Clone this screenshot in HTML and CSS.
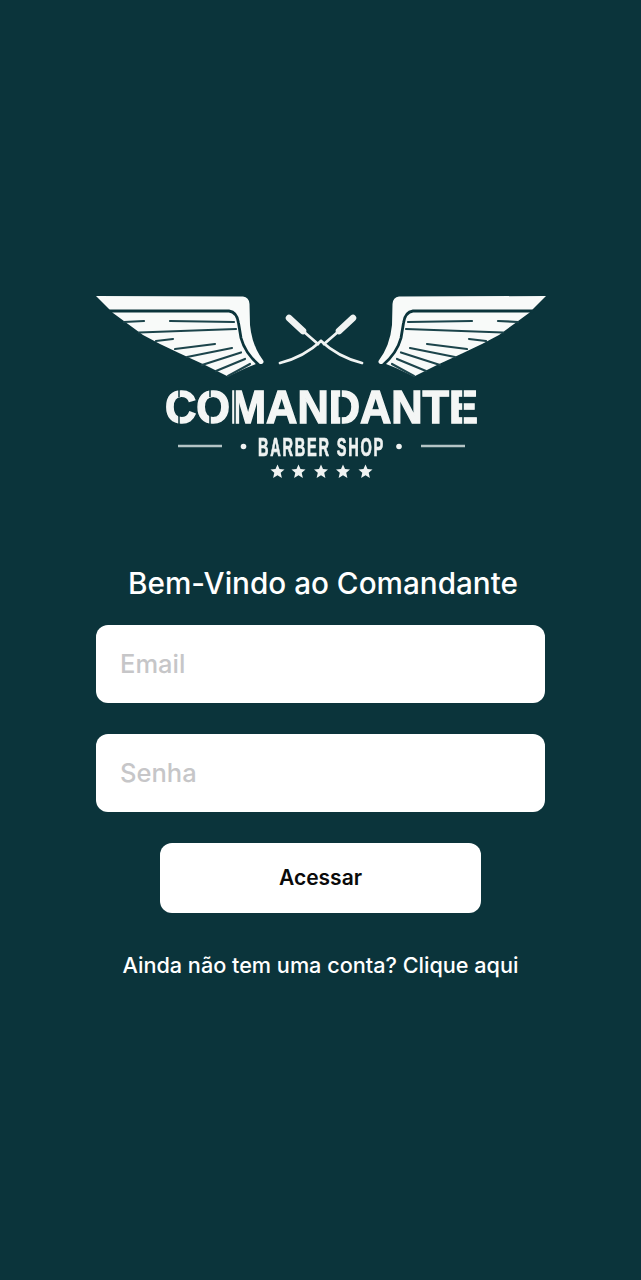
FILE: index.html
```html
<!DOCTYPE html>
<html lang="pt-BR">
<head>
<meta charset="utf-8">
<title>Comandante Barber Shop</title>
<link rel="stylesheet" href="styles.css">
</head>
<body>
<main class="screen">
  <svg class="logo" viewBox="95 292 452 190" role="img" aria-label="Comandante Barber Shop">
    <defs>
      <g id="wing">
        <path class="fill" d="M96 296 L243 296.500 Q249 297 249.500 304 L250 325 Q252 346 263.500 361 Q264 364 260 364 L256 364 L246 368 L228 376.500 L205 365 L180 353.500 L160 344 L143 335 L128 324 L113 313 Z"/>
        <path class="cut wide" d="M110 311 L229 311 Q237 312 238.500 323 L241 338 Q245 353 259 365"/>
        <path class="cut" d="M170 321 L234 322"/>
        <path class="cut" d="M124 322 L144 321"/>
        <path class="cut" d="M139 332.500 L236 329"/>
        <path class="cut" d="M156 341 L173 339"/>
        <path class="cut" d="M175 349 L215 344"/>
        <path class="cut" d="M187 357 L232 348"/>
        <path class="cut" d="M202 365 L241 352.500"/>
        <path class="cut" d="M216 371 L245 359"/>
        <path class="cut" d="M228 376 L250 364"/>
      </g>
      <g id="razor">
        <path class="blade" d="M289 318 L303 331"/>
        <path class="tang" d="M303 331 L318 344"/>
        <path class="tang" d="M321 341 Q304 357 280 363"/>
      </g>
      <polygon id="star" points="0,-7 2,-2.400 7,-2 3.200,1.200 4.400,6.400 0,3.700 -4.400,6.400 -3.200,1.200 -7,-2 -2,-2.400"/>
    </defs>

    <use href="#wing"/>
    <use href="#wing" transform="matrix(-1 0 0 1 642 0)"/>
    <use href="#razor"/>
    <use href="#razor" transform="matrix(-1 0 0 1 642 0)"/>

    <text class="brand" x="165" y="423" textLength="313" lengthAdjust="spacingAndGlyphs">COMANDANTE</text>
    <path class="stencil" d="M179 388V397M179 416V426M210 388V397M210 416V426M235 388V426M341 388V426M463 388V426"/>

    <text class="sub" x="258" y="456" textLength="127" lengthAdjust="spacingAndGlyphs">BARBER SHOP</text>
    <path class="rule" d="M178 446H222M421 446H465"/>
    <circle class="mark" cx="243.500" cy="446.500" r="2.800"/>
    <circle class="mark" cx="399" cy="446.500" r="2.800"/>
    <use class="mark" href="#star" x="277.500" y="471.500"/>
    <use class="mark" href="#star" x="298.500" y="471.500"/>
    <use class="mark" href="#star" x="321" y="471.500"/>
    <use class="mark" href="#star" x="343" y="471.500"/>
    <use class="mark" href="#star" x="365.500" y="471.500"/>
  </svg>

  <h1 class="title">Bem-Vindo ao Comandante</h1>

  <form class="form">
    <div class="field">Email</div>
    <div class="field">Senha</div>
    <button class="submit" type="button">Acessar</button>
  </form>

  <a class="signup" href="#">Ainda não tem uma conta? Clique aqui</a>
</main>
</body>
</html>
```

FILE: styles.css
```css
* {
  box-sizing: border-box;
}

html,
body {
  margin: 0;
  height: 100%;
}

body {
  background: #0b343b;
  font-family: Inter, Roboto, "Liberation Sans", sans-serif;
}

.screen {
  width: 641px;
  height: 1280px;
  padding-top: 292px;
  display: flex;
  flex-direction: column;
  align-items: center;
  overflow: hidden;
}

.logo {
  display: block;
  width: 452px;
  height: 190px;
  flex: none;
  filter: blur(0.6px);
}

.fill {
  fill: #f8faf9;
}

.cut {
  fill: none;
  stroke: #1c444b;
  stroke-width: 2.200;
  stroke-linecap: round;
  stroke-linejoin: round;
}

.cut.wide {
  stroke: #0b343b;
  stroke-width: 2.800;
}

.blade {
  fill: none;
  stroke: #f0f3f2;
  stroke-width: 6.500;
  stroke-linecap: round;
}

.tang {
  fill: none;
  stroke: #f0f3f2;
  stroke-width: 2.800;
  stroke-linecap: round;
}

.brand {
  fill: #f4f6f5;
  stroke: #f4f6f5;
  stroke-width: 1.400;
  font-family: "Liberation Sans", sans-serif;
  font-weight: 700;
  font-size: 46px;
}

.stencil {
  fill: none;
  stroke: #0b343b;
  stroke-width: 1.500;
}

.sub {
  fill: #eef2f1;
  stroke: #eef2f1;
  stroke-width: 0.700;
  font-family: "Liberation Sans Narrow", "Liberation Sans", sans-serif;
  font-weight: 700;
  font-size: 25px;
  letter-spacing: 3px;
}

.rule {
  fill: none;
  stroke: #b4c4c5;
  stroke-width: 2.400;
}

.mark {
  fill: #f0f3f2;
}

.title {
  margin: 84px 0 0 5px;
  color: #fff;
  font-size: 29.700px;
  line-height: 34px;
  font-weight: 500;
  white-space: nowrap;
}

.form {
  margin-top: 25px;
  width: 449px;
  display: flex;
  flex-direction: column;
  align-items: center;
  gap: 31px;
}

.field {
  width: 100%;
  height: 78px;
  padding: 0 0 2px 24px;
  display: flex;
  align-items: center;
  background: #fff;
  border-radius: 12px;
  color: #c6c6c8;
  font-size: 25.500px;
  font-weight: 500;
}

.submit {
  width: 321px;
  height: 70px;
  padding: 0 0 2px;
  border: 0;
  border-radius: 12px;
  background: #fff;
  color: #0a0a0a;
  font-family: inherit;
  font-size: 21px;
  font-weight: 600;
}

.signup {
  margin-top: 38px;
  color: #fff;
  font-size: 21.650px;
  line-height: 28px;
  font-weight: 500;
  text-decoration: none;
  white-space: nowrap;
}
```
